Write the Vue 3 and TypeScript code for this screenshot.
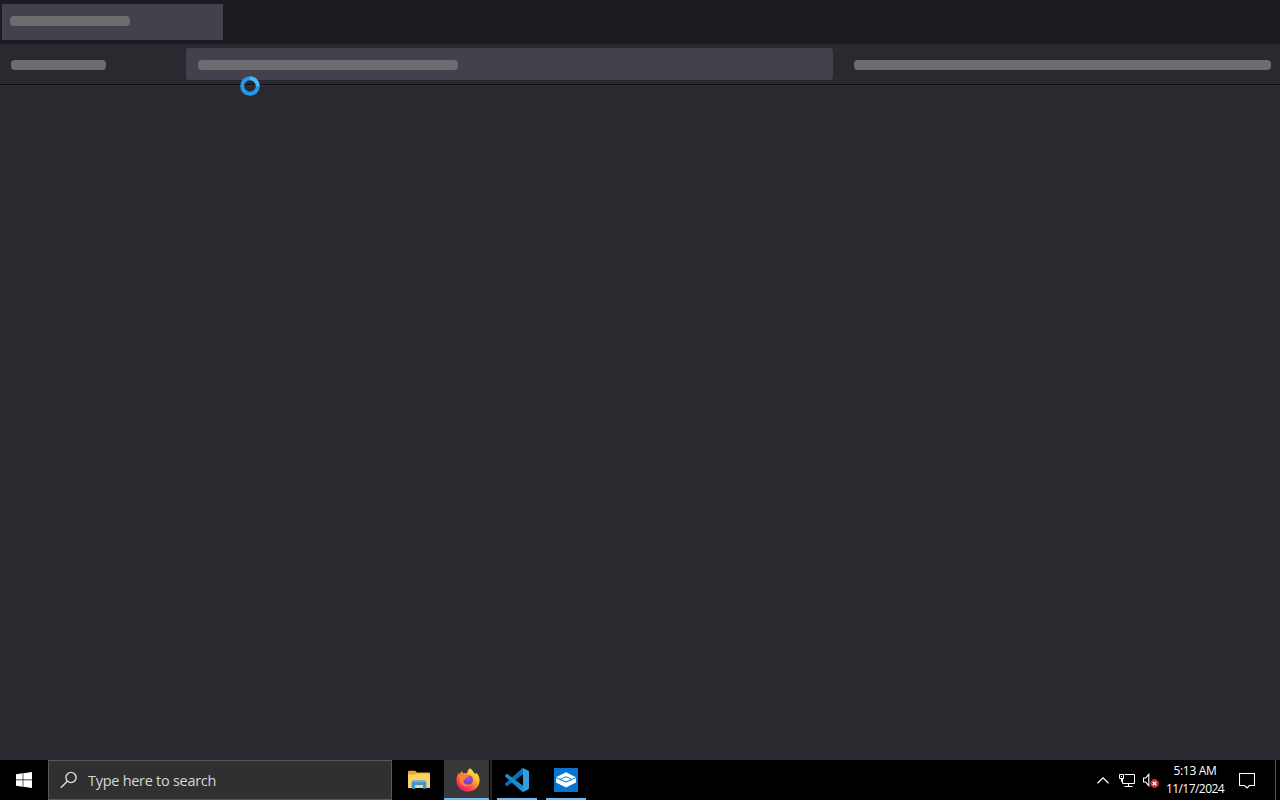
<template>
  <div class="desktop">
    <div class="browser">
      <div class="tab-strip">
        <div class="tab">
          <span class="skeleton" :style="{ width: `${skeletons.tab}px` }"></span>
        </div>
      </div>
      <div class="toolbar">
        <div class="nav">
          <span class="skeleton" :style="{ width: `${skeletons.nav}px` }"></span>
        </div>
        <div class="url-bar">
          <span class="skeleton" :style="{ width: `${skeletons.url}px` }"></span>
        </div>
        <span class="skeleton" :style="{ width: `${skeletons.actions}px` }"></span>
      </div>
      <div class="page"></div>
    </div>

    <div class="taskbar">
      <button class="start" aria-label="Start">
        <svg width="16" height="16" viewBox="0 0 16 16" fill="#fff">
          <path d="M0 2.2 6.7 1.3V7.6H0zM7.3 1.2 16 0V7.6H7.3zM0 8.3H6.7V14.7L0 13.8zM7.3 8.3H16V16L7.3 14.8z" />
        </svg>
      </button>
      <div class="search">
        <svg width="18" height="18" viewBox="0 0 18 18" fill="none" stroke="#dedede" stroke-width="1.4">
          <circle cx="11" cy="6.5" r="5.1" />
          <path d="M7.3 10.2.8 16.7" />
        </svg>
        <span>Type here to search</span>
      </div>

      <div class="apps">
        <button
          v-for="app in apps"
          :key="app.id"
          :class="['app', `app-${app.id}`, { running: app.running, active: app.active }]"
          :aria-label="app.name"
        >
          <svg v-if="app.id === 'explorer'" width="22" height="20" viewBox="0 0 22 20">
            <path d="M0 1.4Q0 .8.7.8H7.2L9 2.4H21.2Q22 2.4 22 3.2V17.8H0z" fill="#e9a72c" />
            <path d="M0 4.4H8L9.6 3.4H22V18H0z" fill="#fcd266" />
            <path d="M3.7 18.8V12.2Q3.7 10.6 5.3 10.6H16.7Q18.3 10.6 18.3 12.2V18.8H14.8V15H7.2V18.8z" fill="#3e93cc" />
            <path d="M3.7 12.2Q3.7 10.6 5.3 10.6H16.7Q18.3 10.6 18.3 12.2z" fill="#67b3dc" />
            <path d="M7.2 15H14.8V18H7.2z" fill="#f3d88c" />
          </svg>

          <svg v-else-if="app.id === 'firefox'" width="24" height="24" viewBox="0 0 24 24">
            <defs>
              <linearGradient id="ff-body" x1=".85" y1=".05" x2=".2" y2=".95">
                <stop offset="0" stop-color="#fff04a" />
                <stop offset=".35" stop-color="#ffb52b" />
                <stop offset=".65" stop-color="#ff583f" />
                <stop offset="1" stop-color="#e8157b" />
              </linearGradient>
              <radialGradient id="ff-globe" cx=".5" cy=".3" r=".8">
                <stop offset="0" stop-color="#a050dc" />
                <stop offset="1" stop-color="#6540bc" />
              </radialGradient>
            </defs>
            <path
              d="M13.9.3C16 1.5 17 3 17.5 4.5 19 5.1 19.5 5.8 19.8 6.5 20 5.8 20 5.1 19.9 4.5 22.5 6.6 23.7 9.5 23.6 12.6 23.4 19 18.5 23.6 12 23.6 5.4 23.6.4 18.8.4 12.4.4 9.4 1.5 6.6 3 4.8L3.3 6.7C4 5.1 5.1 3.9 6.2 3.1 6.2 4 6.4 4.8 6.9 5.4 8.4 5 9.9 5.1 11.1 5.5 11.2 3.6 12.3 1.6 13.9.3z"
              fill="url(#ff-body)"
            />
            <circle cx="12.2" cy="12" r="4.8" fill="url(#ff-globe)" />
            <path
              d="M3.3 6.7C5 5.1 8.8 4.8 11.1 6.8 12.4 7.1 13 7.5 12.7 8.5 12.1 9.5 10.1 9.5 9.4 10.3 9.1 12 7.5 11.9 7.2 13.5 8 17 12.1 17.4 14.6 15.8 11.5 20.7 4.3 18.4 3.4 12.8z"
              fill="#ff8130"
            />
          </svg>

          <svg v-else-if="app.id === 'vscode'" width="24" height="24" viewBox="0 0 24 24">
            <path d="M17.1.3 0 15.6Q-.5 16.1 0 16.6L1.4 17.9Q1.9 18.3 2.5 17.9L22.8 2.7z" fill="#0870b8" />
            <path d="M17.1 23.7 0 8.4Q-.5 7.9 0 7.4L1.4 6.1Q1.9 5.7 2.5 6.1L22.8 21.3z" fill="#168bd0" />
            <path d="M17.1.3Q17.7-.1 18.4.2L23.1 2.5Q24 2.9 24 3.9V20.1Q24 21.1 23.1 21.5L18.4 23.8Q17.7 24.1 17.1 23.7 18 23.6 18 22.3V1.7Q18 .4 17.1.3z" fill="#309ee0" />
          </svg>

          <svg v-else width="24" height="24" viewBox="0 0 24 24">
            <path d="M0 0H24V24H0z" fill="#0874ce" />
            <path d="M2 9.3 12 4.3 22 9.3V14.4L12 19.6 2 14.4z" fill="#fff" />
            <path d="M2 9.6 6 11.4 12 8.7 18 11.4 22 9.6" fill="none" stroke="#0874ce" stroke-width=".9" />
            <path d="M6 11.4 12 14 18 11.4" fill="none" stroke="#0874ce" stroke-width="1.1" />
          </svg>
        </button>
      </div>

      <div class="tray">
        <svg class="chevron" width="12" height="7" viewBox="0 0 12 7" fill="none" stroke="#fff" stroke-width="1.3">
          <path d="M.5 6.3 6 .8 11.5 6.3" />
        </svg>
        <svg class="network" width="17" height="15" viewBox="0 0 17 15" fill="none" stroke="#fff">
          <path d="M5.5 1.5H15.5V10.5H3.5V6M9.5 10.5V13.5M5.5 13.5H13.5" />
          <path d="M.5 1.5H4.5V5.5H.5zM2.5 5.5V8.5H3.5" />
          <path d="M2 3.5H3" />
        </svg>
        <svg class="volume" width="17" height="15" viewBox="0 0 17 15">
          <path d="M.5 5H2.6L5.8 1.3V12.7L2.6 9H.5z" fill="none" stroke="#fff" stroke-width="1.1" />
          <circle cx="11.5" cy="10.5" r="4.4" fill="#c92c3e" />
          <path d="m9.7 8.7 3.6 3.6m0-3.6-3.6 3.6" stroke="#fff" stroke-width="1.3" />
        </svg>
        <div class="clock">
          <span class="time">5:13 AM</span>
          <span class="date">11/17/2024</span>
        </div>
        <svg class="notifications" width="16" height="17" viewBox="0 0 16 17" fill="none" stroke="#fff" stroke-width="1.1">
          <path d="M.5 1.5H15.5V13.5H10.5L8 16 5.5 13.5H.5z" />
        </svg>
        <div class="show-desktop"></div>
      </div>
    </div>

    <div class="busy-cursor">
      <svg width="20" height="20" viewBox="0 0 20 20" fill="none">
        <circle cx="10" cy="10" r="7.8" stroke="#229ae8" stroke-width="4" />
        <path d="M10 2.2A7.8 7.8 0 0 1 17.8 10" stroke="#4bb9f8" stroke-width="3.6" />
      </svg>
    </div>
  </div>
</template>

<script setup lang="ts">
interface TaskbarApp {
  id: 'explorer' | 'firefox' | 'vscode' | 'sandbox'
  name: string
  running?: boolean
  active?: boolean
}

const apps: TaskbarApp[] = [
  { id: 'explorer', name: 'File Explorer' },
  { id: 'firefox', name: 'Firefox', running: true, active: true },
  { id: 'vscode', name: 'Visual Studio Code', running: true },
  { id: 'sandbox', name: 'Windows Sandbox', running: true }
]

// placeholder widths while the browser chrome loads
const skeletons = {
  tab: 120,
  nav: 95,
  url: 260,
  actions: 417
}
</script>

<style>
body {
  margin: 0;
  background: #2a292f;
}
</style>

<style scoped>
.desktop {
  position: relative;
  display: flex;
  flex-direction: column;
  width: 1280px;
  height: 800px;
  overflow: hidden;
  font-family: 'Open Sans', 'Noto Sans', sans-serif;
}

.desktop svg {
  display: block;
  flex: none;
}

button {
  padding: 0;
  border: none;
  background: none;
}

.browser {
  display: flex;
  flex: 1;
  flex-direction: column;
  background: #2a292f;
}

.tab-strip {
  box-sizing: border-box;
  height: 44px;
  padding: 4px 2px;
  background: #1c1b20;
}

.tab {
  box-sizing: border-box;
  width: 221px;
  height: 36px;
  padding: 12px 8px;
  background: #43414c;
}

.skeleton {
  display: block;
  flex: none;
  height: 10px;
  border-radius: 4px;
  background: #6d6c71;
}

.toolbar {
  box-sizing: border-box;
  display: flex;
  align-items: center;
  height: 41px;
  padding: 0 9px 0 11px;
  border-bottom: 1px solid #111014;
  background: #2a292f;
}

.toolbar .skeleton {
  margin-top: 1px;
}

.nav {
  width: 175px;
}

.url-bar {
  box-sizing: border-box;
  display: flex;
  align-items: center;
  width: 647px;
  height: 32px;
  margin-right: 21px;
  padding-left: 12px;
  border-radius: 3px;
  background: #43414c;
}

.page {
  flex: 1;
  border-top: 1px solid #302f35;
}

.taskbar {
  display: flex;
  height: 40px;
  background: #000;
}

.start {
  display: flex;
  align-items: center;
  justify-content: center;
  width: 48px;
}

.search {
  box-sizing: border-box;
  display: flex;
  align-items: center;
  gap: 10px;
  width: 344px;
  padding-left: 11px;
  border: 1px solid #575757;
  background: #303030;
  color: #d6d6d6;
  font-size: 14.5px;
  letter-spacing: -0.28px;
  white-space: nowrap;
}

.apps {
  display: flex;
  gap: 5px;
  padding-left: 2px;
}

.app {
  box-sizing: border-box;
  display: flex;
  align-items: center;
  justify-content: center;
  width: 44px;
  border-bottom: 2px solid transparent;
  padding-top: 2px;
}

.app-explorer {
  width: 50px;
  margin-right: -5px;
  padding-right: 1px;
}

.app.running {
  width: 40px;
  border-bottom-color: #76b9ed;
}

.app.app-firefox.active {
  width: 45px;
  margin-right: 3px;
  padding-left: 2px;
  background: #383838;
  box-shadow: 1px 0 #000, 3px 0 #262626;
}

.app-vscode,
.app-sandbox {
  margin-right: 4px;
}

.tray {
  display: flex;
  align-items: center;
  margin-left: auto;
  color: #fff;
}

.network {
  margin-left: 10px;
}

.volume {
  margin-left: 7px;
}

.clock {
  display: flex;
  flex-direction: column;
  align-items: center;
  width: 60px;
  margin-left: 5px;
  font-size: 12px;
  line-height: 18px;
  white-space: nowrap;
}

.time {
  letter-spacing: -0.3px;
}

.date {
  letter-spacing: -0.55px;
}

.notifications {
  margin-left: 14px;
}

.show-desktop {
  width: 4px;
  height: 40px;
  margin-left: 20px;
  border-left: 1px solid #555;
}

/* wait cursor floats above the window */
.busy-cursor {
  position: absolute;
  top: 76px;
  left: 240px;
}
</style>
